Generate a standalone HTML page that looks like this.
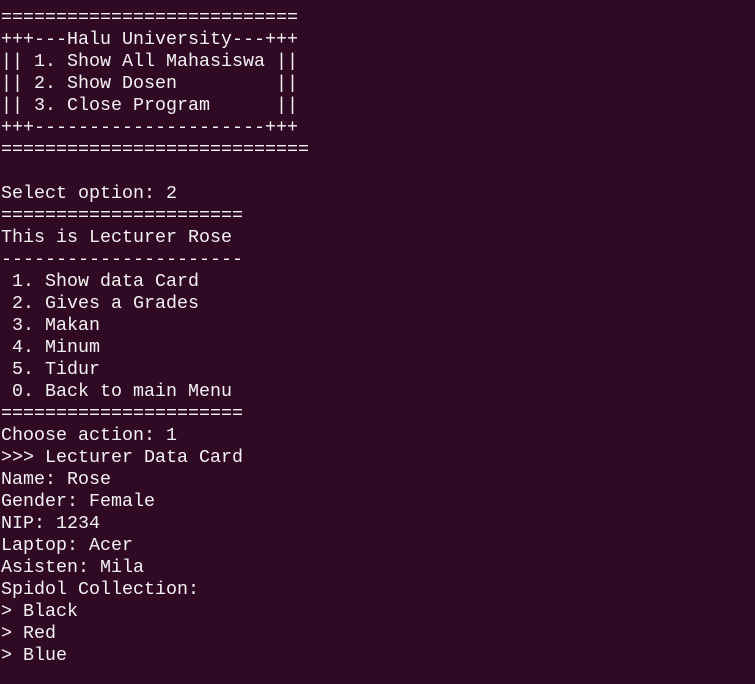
<!DOCTYPE html>
<html><head><style>
html,body{margin:0;padding:0;background:#300a24;width:755px;height:684px;overflow:hidden}
pre{margin:0;position:absolute;left:1px;top:7px;font-family:"Liberation Mono","DejaVu Sans Mono",monospace;font-size:18.33px;line-height:22px;color:#f2f2f2}
</style></head><body><pre>===========================
+++---Halu University---+++
|| 1. Show All Mahasiswa ||
|| 2. Show Dosen         ||
|| 3. Close Program      ||
+++---------------------+++
============================

Select option: 2
======================
This is Lecturer Rose
----------------------
 1. Show data Card
 2. Gives a Grades
 3. Makan
 4. Minum
 5. Tidur
 0. Back to main Menu
======================
Choose action: 1
&gt;&gt;&gt; Lecturer Data Card
Name: Rose
Gender: Female
NIP: 1234
Laptop: Acer
Asisten: Mila
Spidol Collection:
&gt; Black
&gt; Red
&gt; Blue</pre></body></html>
